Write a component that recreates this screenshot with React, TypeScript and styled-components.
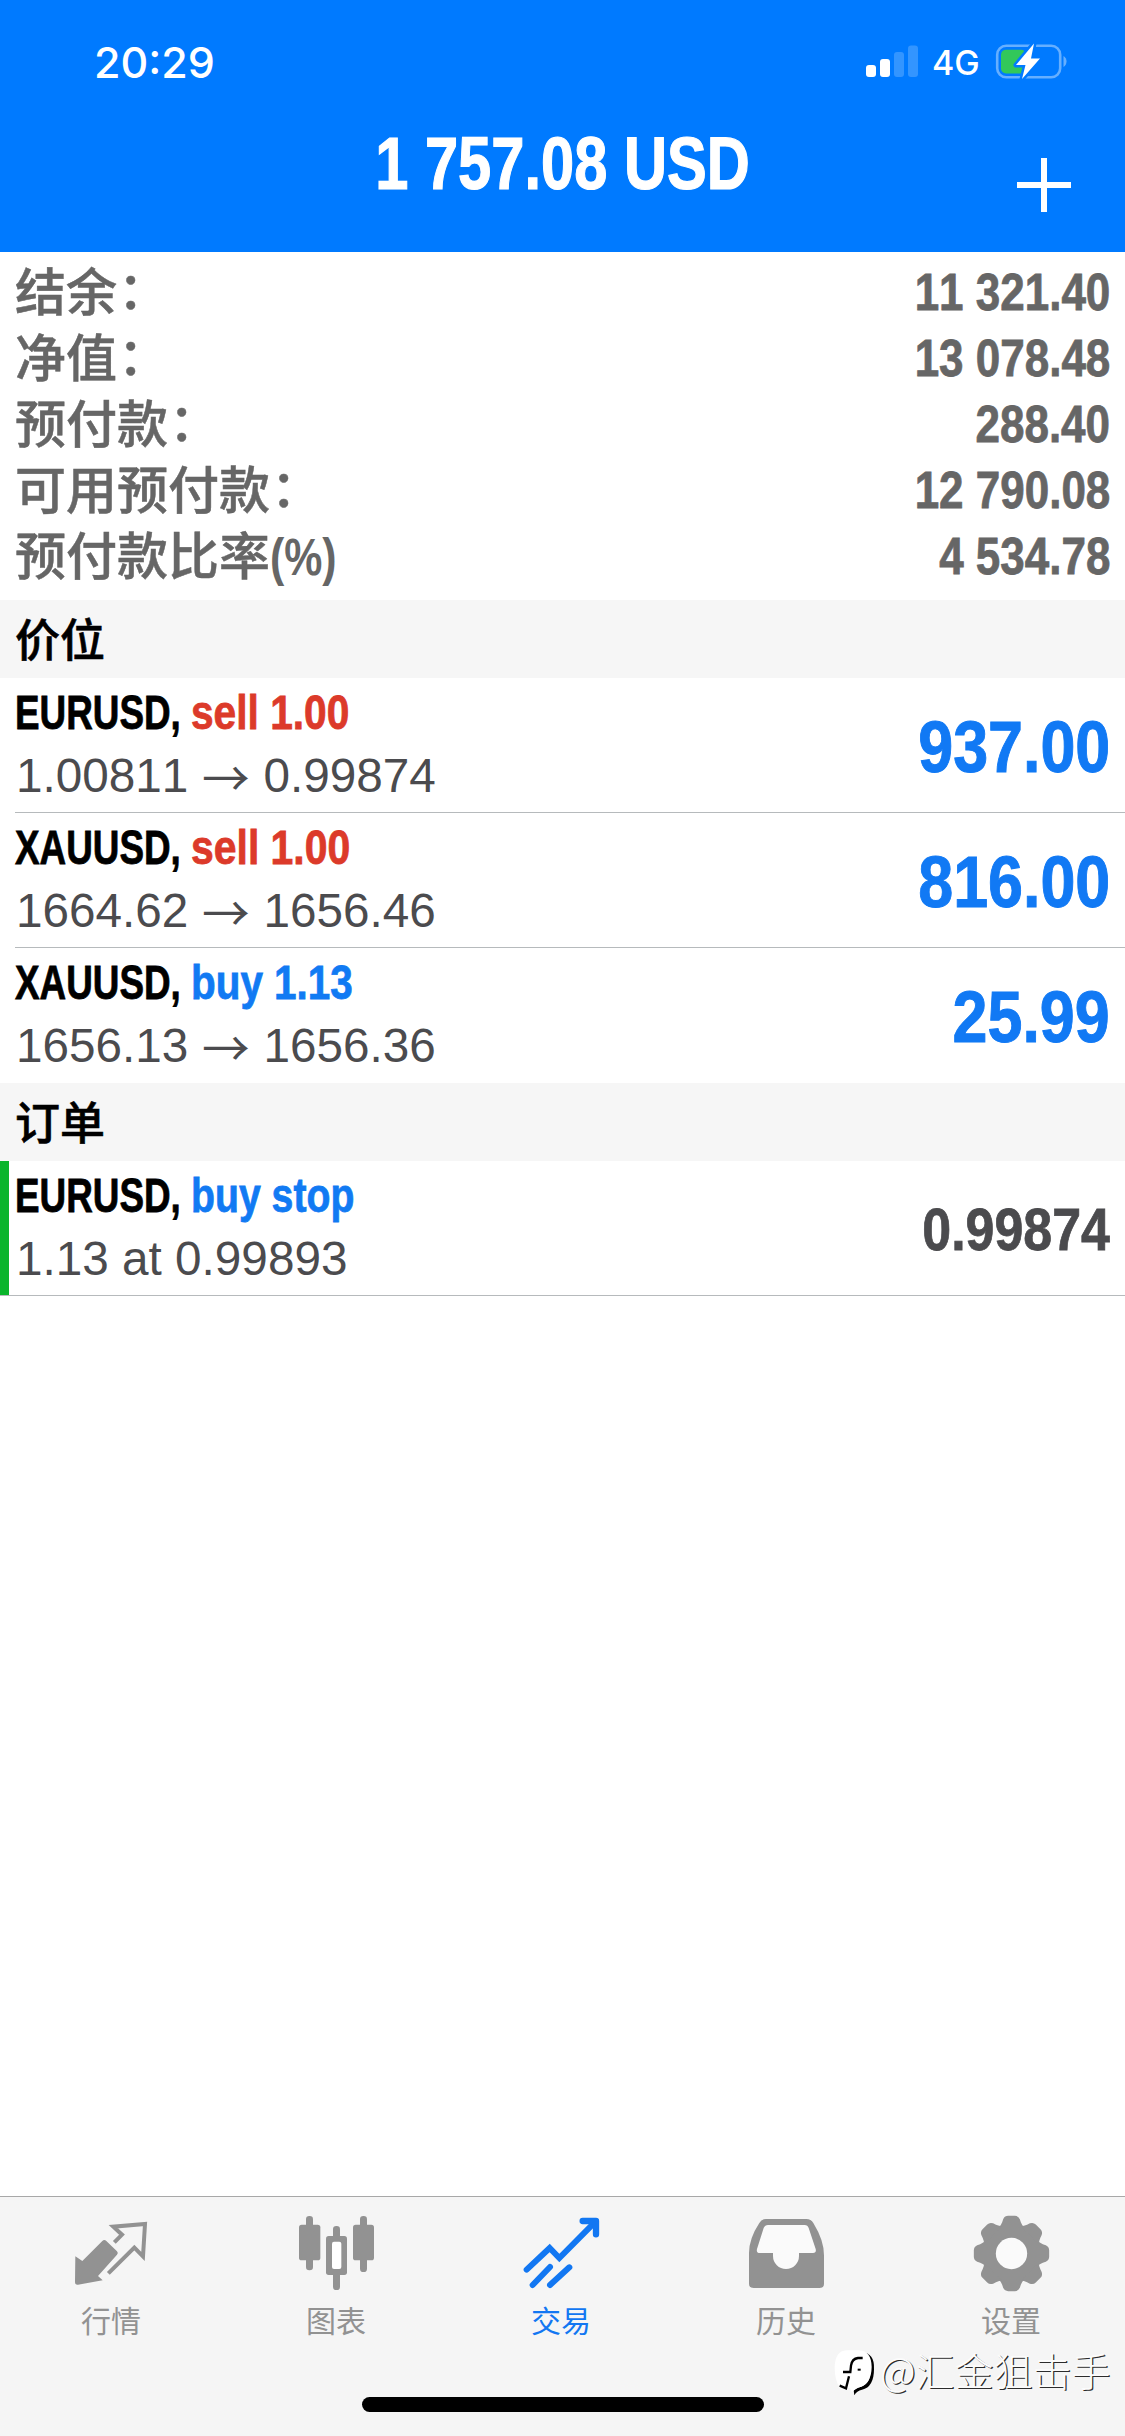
import React from 'react';
import styled, { createGlobalStyle } from 'styled-components';

const latin = '"Liberation Sans", "Noto Sans CJK SC", sans-serif';
const cjk = '"Noto Sans CJK SC", "Liberation Sans", sans-serif';
const blue = '#007aff';
const gray = '#929292';

const GlobalStyle = createGlobalStyle`
  * { box-sizing: border-box; font-kerning: none !important; }
  body { margin: 0; background: #fff; font-family: ${latin}; }
`;

const Screen = styled.div`
  width: 1125px;
  height: 2436px;
  display: flex;
  flex-direction: column;
  position: relative;
  overflow: hidden;
  background: #fff;
`;

const Header = styled.header`
  height: 252px;
  flex: none;
  background: ${blue};
  color: #fff;
  display: flex;
  flex-direction: column;
`;

const StatusBar = styled.div`
  height: 122px;
  display: flex;
  justify-content: space-between;
  padding: 0 58px 0 94px;
`;

const Clock = styled.div`
  font: 550 43px/56px Inter, sans-serif;
  padding-top: 34px;
`;

const StatusIcons = styled.div`
  display: flex;
  align-items: flex-start;
  padding-top: 42px;
`;

const Network = styled.span`
  font: 500 34px/40px Inter, sans-serif;
  width: 48px;
  margin: 1px 15px 0 14px;
  white-space: nowrap;
`;

const NavBar = styled.div`
  height: 130px;
  display: grid;
  grid-template-columns: 150px 1fr 150px;
  align-items: start;
`;

const Title = styled.h1`
  grid-column: 2;
  margin: 0;
  font: bold 74px/84px ${latin};
  -webkit-text-stroke: 1.2px currentColor;
  text-align: center;
  white-space: nowrap;
  transform: scaleX(0.806);
`;

const AddButton = styled.button`
  border: 0;
  padding: 36px 0 0 42px;
  background: none;
  display: block;
  text-align: left;
  line-height: 0;
`;

const Summary = styled.section`
  height: 348px;
  flex: none;
  padding: 6px 15px 0;
`;

const SummaryRow = styled.div`
  height: 66px;
  display: flex;
  justify-content: space-between;
  color: #666;
`;

const SummaryLabel = styled.span`
  display: flex;
  font: 500 51px/71px ${latin};
  -webkit-text-stroke: 0.5px currentColor;
`;

const Colon = styled.span`
  transform: translate(1px, -2px);
`;

const Squeezed = styled.span<{ $scale: number; $right?: boolean }>`
  display: inline-block;
  white-space: nowrap;
  transform: scaleX(${(p) => p.$scale});
  transform-origin: ${(p) => (p.$right ? 'right' : 'left')} center;
`;

const Percent = styled(Squeezed)`
  font-weight: bold;
  -webkit-text-stroke: 0;
`;

const SummaryValue = styled(Squeezed)`
  font: bold 52px/68px ${latin};
  -webkit-text-stroke: 0.8px currentColor;
`;

const SectionTitle = styled.h2`
  height: 78px;
  flex: none;
  margin: 0;
  padding-left: 15px;
  background: #f6f6f6;
  color: #000;
  font: 500 45px/76px ${cjk};
  -webkit-text-stroke: 0.6px currentColor;
`;

const Row = styled.div<{ $line: 'inset' | 'full' | 'none'; $pending?: boolean }>`
  height: 135px;
  flex: none;
  display: flex;
  justify-content: space-between;
  padding: 0 15px;
  background-image: linear-gradient(#b6babc, #b6babc)${(p) => (p.$pending ? ', linear-gradient(#0ab52c, #0ab52c)' : '')};
  background-repeat: no-repeat;
  background-size: ${(p) => (p.$line === 'none' ? '0 0' : '100% 1px')}, 9px 134px;
  background-position: ${(p) => (p.$line === 'inset' ? '15px 134px' : '0 134px')}, 0 0;
`;

const Deal = styled.div`
  display: flex;
  flex-direction: column;
`;

const DealTitle = styled.div`
  height: 68px;
  display: flex;
  font: bold 49px/68px ${latin};
  -webkit-text-stroke: 0.8px currentColor;
`;

const SymbolBox = styled.span`
  width: 176px;
  white-space: nowrap;
  color: #000;
`;

const Side = styled(Squeezed)<{ $sell: boolean }>`
  color: ${(p) => (p.$sell ? '#dc3a2a' : '#117af3')};
`;

const DealPrices = styled.div`
  display: flex;
  padding-left: 1px;
  font: 47.7px/60px ${latin};
  color: #4b4b4e;
  white-space: pre;
`;

const Arrow = styled.span`
  width: 75px;
  text-align: center;
  font-family: "Noto Sans CJK SC", sans-serif;
`;

const Profit = styled(Squeezed)`
  font: bold 73px/138px ${latin};
  -webkit-text-stroke: 1px currentColor;
  color: #1179f4;
`;

const Current = styled(Squeezed)`
  font: bold 60px/138px ${latin};
  -webkit-text-stroke: 0.8px currentColor;
  color: #4b4b4e;
`;

const Spacer = styled.div`
  flex: 1;
`;

const TabBar = styled.nav`
  height: 240px;
  flex: none;
  background: #f5f5f5;
  border-top: 1px solid #a8a8a8;
  display: flex;
  flex-direction: column;
  align-items: center;
`;

const Tabs = styled.div`
  width: 100%;
  height: 200px;
  display: grid;
  grid-template-columns: repeat(5, 1fr);
`;

const Tab = styled.div<{ $active?: boolean }>`
  display: flex;
  flex-direction: column;
  align-items: center;
  padding-top: 19px;
  color: ${(p) => (p.$active ? '#1277f2' : gray)};
`;

const TabLabel = styled.span`
  margin: 6px 3px 0 0;
  font: 400 30px/44px ${cjk};
`;

const TabSvg = styled.svg`
  width: 75px;
  height: 75px;
  display: block;
  overflow: visible;
`;

const HomeIndicator = styled.div`
  width: 402px;
  height: 15px;
  border-radius: 8px;
  background: #000;
`;

const Watermark = styled.div`
  position: absolute;
  left: 834px;
  top: 2349px;
  display: flex;
  align-items: flex-start;
  color: #fcfcfc;
  white-space: nowrap;
`;

const WatermarkText = styled.span`
  font: 300 39px/40px ${cjk};
  text-shadow: 1.3px 1.3px 0 #2c2c2c;
`;

const LogoSvg = styled.svg`
  width: 46px;
  height: 48px;
  overflow: visible;
`;

const summary = [
  { label: '结余', tail: '：', value: '11 321.40' },
  { label: '净值', tail: '：', value: '13 078.48' },
  { label: '预付款', tail: '：', value: '288.40' },
  { label: '可用预付款', tail: '：', value: '12 790.08' },
  { label: '预付款比率', tail: '(%)', value: '4 534.78' },
];

const positions = [
  { symbol: 'EURUSD,', side: 'sell 1.00', scale: 0.83, from: '1.00811', to: '0.99874', profit: '937.00' },
  { symbol: 'XAUUSD,', side: 'sell 1.00', scale: 0.835, from: '1664.62', to: '1656.46', profit: '816.00' },
  { symbol: 'XAUUSD,', side: 'buy 1.13', scale: 0.825, from: '1656.13', to: '1656.36', profit: '25.99' },
];

const Signal = () => (
  <svg width="52" height="36" viewBox="866 42 52 36">
    <rect x="866" y="65" width="10" height="12" rx="3" fill="#fff" />
    <rect x="880" y="59" width="10" height="18" rx="3" fill="#fff" />
    <rect x="894" y="52" width="10" height="25" rx="3" fill="#3395ff" />
    <rect x="908" y="45.5" width="10" height="31.5" rx="3" fill="#3395ff" />
  </svg>
);

const Battery = () => (
  <svg width="72" height="38" viewBox="995 42 72 38">
    <rect x="997.2" y="45.7" width="63" height="31.5" rx="9" fill="none" stroke="#66afff" strokeWidth="2.6" />
    <path d="M1063.5 56a6.5 6.5 0 0 1 0 11z" fill="#66afff" />
    <rect x="1001" y="49.8" width="25" height="23.6" rx="5" fill="#32c85a" />
    <path
      d="M1034 43.5 1016 65h9.5l-3.5 14L1040 58.5h-9z"
      fill="#fff"
      stroke={blue}
      strokeWidth="5"
      strokeLinejoin="round"
      paintOrder="stroke"
    />
  </svg>
);

const QuotesIcon = () => (
  <TabSvg viewBox="225 108 225 225">
    <path
      d="M226 229 247 243 307 183q6-6 12 0L351 214q5 5 0 10L294 288 308 301 234 314q-9 1-9-8z"
      fill="currentColor"
    />
    <path d="M343 187 366 164 340 140 435 132 429 229 403 203 325 280" fill="none" stroke="currentColor" strokeWidth="12" />
  </TabSvg>
);

const ChartIcon = () => (
  <TabSvg viewBox="900 108 225 225" fill="currentColor">
    <rect x="897" y="134" width="64" height="107" rx="8" />
    <rect x="918" y="108" width="21" height="163" rx="10" />
    <rect x="1059" y="134" width="63" height="107" rx="8" />
    <rect x="1080" y="108" width="21" height="168" rx="10" />
    <rect x="978" y="168" width="63" height="117" rx="8" />
    <rect x="999" y="138" width="21" height="192" rx="10" />
    <rect x="996" y="185" width="28" height="82" rx="6" fill="#fff" />
  </TabSvg>
);

const TradeIcon = () => (
  <TabSvg
    viewBox="225 108 225 225"
    fill="none"
    stroke="currentColor"
    strokeWidth="18"
    strokeLinecap="round"
    strokeLinejoin="round"
  >
    <path d="M230 269 299 204 328 234 437 124" strokeLinejoin="miter" />
    <path d="M398 123h40v40" strokeWidth="19" />
    <path d="M248 315 300 261M300 315 358 262" />
  </TabSvg>
);

const HistoryIcon = () => (
  <TabSvg viewBox="900 108 225 225">
    <path
      fill="currentColor"
      d="M948 117H1069Q1083 117 1090 129Q1122 181 1122 226V311Q1122 324 1109 324H911Q897 324 897 311V219Q897 176 928 129Q935 117 948 117Z"
    />
    <path
      fill="#fafafa"
      d="M954 135Q945 135 941 144L921 207Q918 219 930 219H969V228A39 39 0 0 0 1047 228V219H1089Q1100 219 1097 207L1076 144Q1073 135 1064 135Z"
    />
  </TabSvg>
);

const SettingsIcon = () => (
  <TabSvg viewBox="525 108 225 225">
    <g transform="translate(634.5 220.5)" fill="currentColor">
      <circle r="88" />
      {[0, 45, 90, 135, 180, 225, 270, 315].map((a) => (
        <path
          key={a}
          transform={`rotate(${a})`}
          d="M-38-78Q-32-84-28-94L-25-103Q-20-113-10-113H10Q20-113 25-103L28-94Q32-84 38-78Z"
        />
      ))}
      <circle r="47" fill="#fafafa" />
    </g>
  </TabSvg>
);

const WatermarkLogo = () => (
  <LogoSvg viewBox="104 518 138 144">
    <path
      d="M142 528H187Q226 530 224 578Q224 632 188 640Q172 643 165 657L163 642Q173 633 185 631Q214 622 214 580Q212 534 184 528Z"
      fill="#000"
    />
    <path d="M142 522H180Q216 524 217 572Q216 618 186 631Q170 634 158 648L152 635H122Q106 612 106 575Q106 524 142 522Z" fill="#fff" />
    <path d="M190 545H176Q158 547 155 568L153 587H131M149 600 140 636 121 628" fill="none" stroke="#000" strokeWidth="7" />
    <rect x="175" y="577" width="9" height="6" fill="#000" />
  </LogoSvg>
);

const tabs = [
  { label: '行情', Icon: QuotesIcon },
  { label: '图表', Icon: ChartIcon },
  { label: '交易', Icon: TradeIcon, active: true },
  { label: '历史', Icon: HistoryIcon },
  { label: '设置', Icon: SettingsIcon },
];

export default function App() {
  return (
    <Screen>
      <GlobalStyle />
      <Header>
        <StatusBar>
          <Clock>20:29</Clock>
          <StatusIcons>
            <Signal />
            <Network>4G</Network>
            <Battery />
          </StatusIcons>
        </StatusBar>
        <NavBar>
          <Title>1 757.08 USD</Title>
          <AddButton aria-label="add">
            <svg width="54" height="54" viewBox="0 0 54 54" stroke="#fff" strokeWidth="6">
              <path d="M0 27h54M27 0v54" />
            </svg>
          </AddButton>
        </NavBar>
      </Header>
      <Summary>
        {summary.map(({ label, tail, value }) => (
          <SummaryRow key={label}>
            <SummaryLabel>
              {label}
              {tail === '：' ? <Colon>{tail}</Colon> : <Percent $scale={0.84}>{tail}</Percent>}
            </SummaryLabel>
            <SummaryValue $scale={0.846} $right>{value}</SummaryValue>
          </SummaryRow>
        ))}
      </Summary>
      <SectionTitle>价位</SectionTitle>
      {positions.map((p, i) => (
        <Row key={p.from} $line={i < 2 ? 'inset' : 'none'}>
          <Deal>
            <DealTitle>
              <SymbolBox><Squeezed $scale={0.752}>{p.symbol}</Squeezed></SymbolBox>
              <Side $scale={p.scale} $sell={p.side.startsWith('sell')}>{p.side}</Side>
            </DealTitle>
            <DealPrices>
              <span>{p.from}</span>
              <Arrow>→</Arrow>
              <span>{p.to}</span>
            </DealPrices>
          </Deal>
          <Profit $scale={0.86} $right>{p.profit}</Profit>
        </Row>
      ))}
      <SectionTitle>订单</SectionTitle>
      <Row $line="full" $pending>
        <Deal>
          <DealTitle>
            <SymbolBox><Squeezed $scale={0.752}>EURUSD,</Squeezed></SymbolBox>
            <Side $scale={0.8} $sell={false}>buy stop</Side>
          </DealTitle>
          <DealPrices>1.13 at 0.99893</DealPrices>
        </Deal>
        <Current $scale={0.865} $right>0.99874</Current>
      </Row>
      <Spacer />
      <TabBar>
        <Tabs>
          {tabs.map(({ label, Icon, active }) => (
            <Tab key={label} $active={active}>
              <Icon />
              <TabLabel>{label}</TabLabel>
            </Tab>
          ))}
        </Tabs>
        <HomeIndicator />
      </TabBar>
      <Watermark>
        <WatermarkLogo />
        <WatermarkText>@汇金狙击手</WatermarkText>
      </Watermark>
    </Screen>
  );
}
